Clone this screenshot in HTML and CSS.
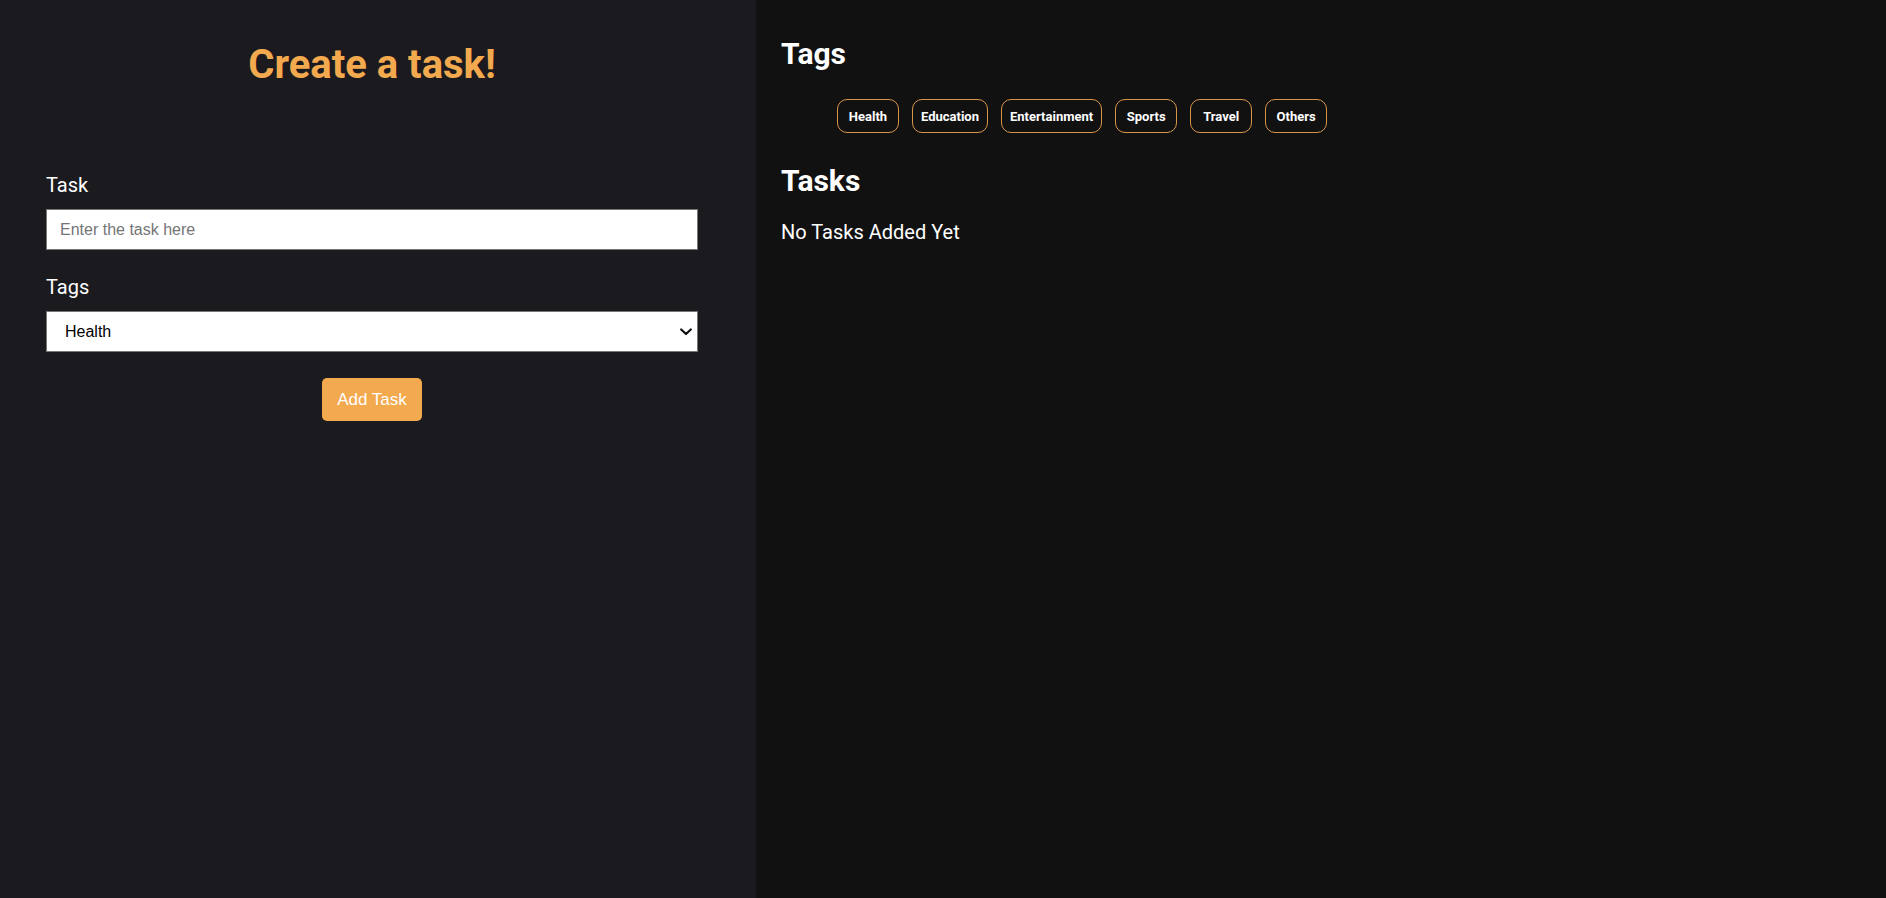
FILE: index.html
```html
<!DOCTYPE html>
<html lang="en">
<head>
<meta charset="utf-8">
<title>Task Manager</title>
<link rel="stylesheet" href="styles.css">
</head>
<body>
<div class="app">
  <section class="create">
    <h1 class="create-title">Create a task!</h1>
    <form class="task-form">
      <label class="field-label" for="task">Task</label>
      <input class="field-input" id="task" type="text" placeholder="Enter the task here">
      <label class="field-label field-label-gap" for="tags">Tags</label>
      <div class="select-wrap">
        <select class="field-select" id="tags">
          <option>Health</option>
          <option>Education</option>
          <option>Entertainment</option>
          <option>Sports</option>
          <option>Travel</option>
          <option>Others</option>
        </select>
        <svg class="select-arrow" width="12" height="8" viewBox="0 0 12 8" aria-hidden="true">
          <polyline points="1.2,1.5 6,6 10.8,1.5" fill="none" stroke="#111" stroke-width="2.2" stroke-linecap="round" stroke-linejoin="round"/>
        </svg>
      </div>
      <div class="form-actions">
        <button class="add-btn" type="button">Add Task</button>
      </div>
    </form>
  </section>
  <section class="board">
    <h2 class="board-title">Tags</h2>
    <ul class="tag-list">
      <li class="tag-chip">Health</li>
      <li class="tag-chip">Education</li>
      <li class="tag-chip">Entertainment</li>
      <li class="tag-chip">Sports</li>
      <li class="tag-chip">Travel</li>
      <li class="tag-chip">Others</li>
    </ul>
    <h2 class="board-title board-title-tasks">Tasks</h2>
    <p class="empty-msg">No Tasks Added Yet</p>
  </section>
</div>
</body>
</html>
```
FILE: styles.css
```css
* { box-sizing: border-box; }
html, body { margin: 0; padding: 0; height: 100%; }
body {
  font-family: Roboto, "Liberation Sans", Arial, sans-serif;
  background: #111111;
  color: #ffffff;
}
.app {
  display: flex;
  height: 898px;
}
.create {
  width: 756px;
  flex: none;
  background: #1b1a1f;
  padding: 41px 58px 0 46px;
}
.create-title {
  margin: 0;
  font-size: 40px;
  font-weight: 700;
  line-height: 47px;
  color: #f3a94e;
  text-align: center;
}
.task-form {
  display: flex;
  flex-direction: column;
  margin-top: 86px;
}
.field-label {
  font-size: 20px;
  line-height: 23px;
  color: #ffffff;
  margin-bottom: 12px;
}
.field-label-gap { margin-top: 26px; }
.field-input, .field-select {
  width: 100%;
  height: 41px;
  border: 1px solid #767676;
  border-radius: 0;
  background: #ffffff;
  font-family: "Liberation Sans", Arial, sans-serif;
  font-size: 16px;
  color: #000000;
  outline: none;
}
.field-input { padding: 0 13px; }
.field-input::placeholder { color: #757575; }
.select-wrap { position: relative; }
.field-select {
  display: block;
  padding: 0 30px 0 18px;
  appearance: none;
  -webkit-appearance: none;
}
.select-arrow {
  position: absolute;
  right: 6px;
  top: 50%;
  transform: translateY(-50%);
  pointer-events: none;
}
.form-actions {
  display: flex;
  justify-content: center;
  margin-top: 26px;
}
.add-btn {
  width: 100px;
  height: 43px;
  border: none;
  border-radius: 5px;
  background: #f3a94e;
  color: #ffffff;
  font-family: "Liberation Sans", Arial, sans-serif;
  font-size: 17px;
  cursor: pointer;
}
.board {
  flex: 1;
  padding: 36px 0 0 25px;
}
.board-title {
  margin: 0;
  font-size: 30px;
  font-weight: 700;
  line-height: 35px;
  color: #ffffff;
}
.tag-list {
  list-style: none;
  display: flex;
  gap: 13px;
  margin: 28px 0 0 0;
  padding: 0 0 0 56px;
}
.tag-chip {
  min-width: 62px;
  height: 34px;
  padding: 0 8px;
  border: 1px solid #d8964a;
  border-radius: 10px;
  display: flex;
  align-items: center;
  justify-content: center;
  font-size: 13px;
  font-weight: 700;
  color: #ffffff;
}
.board-title-tasks { margin-top: 30px; }
.empty-msg {
  margin: 23px 0 0 0;
  font-size: 20px;
  line-height: 23px;
  color: #ffffff;
}
```
